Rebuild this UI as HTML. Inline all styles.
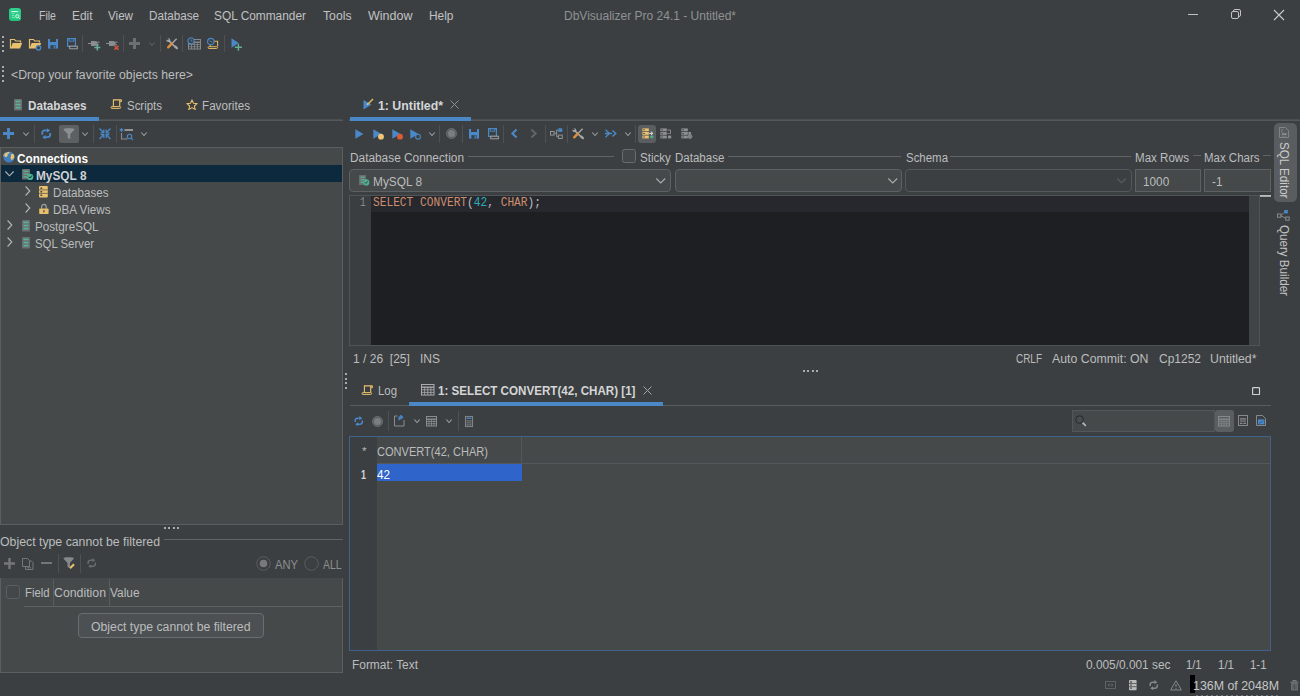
<!DOCTYPE html>
<html lang="en"><head><meta charset="utf-8"><title>DbVisualizer Pro 24.1 - Untitled*</title>
<style>
html,body{margin:0;padding:0}
body{width:1300px;height:696px;overflow:hidden;background:#3c3f41;position:relative;font-family:"Liberation Sans",sans-serif;}
.r{position:absolute}
.i{position:absolute;overflow:visible}
.t{position:absolute;white-space:pre;line-height:16px;transform-origin:0 50%;}
.m{font-family:"Liberation Mono",monospace}
</style></head>
<body>
<div class="r" style="left:9px;top:8px;width:12px;height:13px;background:linear-gradient(180deg,#2fd28c,#22c57e);border-radius:3px;"></div>
<div class="r" style="left:2px;top:36.0px;width:2px;height:2px;background:#a9abac;"></div>
<div class="r" style="left:2px;top:40.7px;width:2px;height:2px;background:#a9abac;"></div>
<div class="r" style="left:2px;top:45.4px;width:2px;height:2px;background:#a9abac;"></div>
<div class="r" style="left:2px;top:50.1px;width:2px;height:2px;background:#a9abac;"></div>
<div class="r" style="left:2px;top:65.5px;width:2px;height:2px;background:#a9abac;"></div>
<div class="r" style="left:2px;top:70.2px;width:2px;height:2px;background:#a9abac;"></div>
<div class="r" style="left:2px;top:74.9px;width:2px;height:2px;background:#a9abac;"></div>
<div class="r" style="left:2px;top:79.6px;width:2px;height:2px;background:#a9abac;"></div>
<div class="r" style="left:82px;top:34.5px;width:1px;height:17px;background:#4e5153;"></div>
<div class="r" style="left:123px;top:34.5px;width:1px;height:17px;background:#4e5153;"></div>
<div class="r" style="left:160px;top:34.5px;width:1px;height:17px;background:#4e5153;"></div>
<div class="r" style="left:182px;top:34.5px;width:1px;height:17px;background:#4e5153;"></div>
<div class="r" style="left:223.5px;top:34.5px;width:1px;height:17px;background:#4e5153;"></div>
<div class="r" style="left:0px;top:119px;width:343px;height:2px;background:linear-gradient(#46494b,#595c5e);"></div>
<div class="r" style="left:0px;top:117px;width:99px;height:4px;background:#4a88c7;"></div>
<div class="r" style="left:34px;top:125px;width:1px;height:18px;background:#4e5153;"></div>
<div class="r" style="left:59px;top:125px;width:20px;height:18px;background:#5c6062;border-radius:2px;"></div>
<div class="r" style="left:93px;top:125px;width:1px;height:18px;background:#4e5153;"></div>
<div class="r" style="left:116px;top:125px;width:1px;height:18px;background:#4e5153;"></div>
<div class="r" style="left:0px;top:147px;width:343px;height:378px;background:#45494a;border:1px solid #5c5f60;box-sizing:border-box;"></div>
<div class="r" style="left:1px;top:165px;width:341px;height:17px;background:#0d293e;"></div>
<div class="r" style="left:164.0px;top:527px;width:2px;height:2px;background:#a9abac;"></div>
<div class="r" style="left:168.4px;top:527px;width:2px;height:2px;background:#a9abac;"></div>
<div class="r" style="left:172.8px;top:527px;width:2px;height:2px;background:#a9abac;"></div>
<div class="r" style="left:177.2px;top:527px;width:2px;height:2px;background:#a9abac;"></div>
<div class="r" style="left:164px;top:539px;width:179px;height:1px;background:#616466;"></div>
<div class="r" style="left:41px;top:562px;width:11px;height:2.4px;background:#74777a;"></div>
<div class="r" style="left:57.5px;top:553.5px;width:1px;height:19px;background:#4e5153;"></div>
<div class="r" style="left:80px;top:553.5px;width:1px;height:19px;background:#4e5153;"></div>
<div class="r" style="left:0px;top:578px;width:343px;height:95px;background:#45494a;border:1px solid #5c5f60;box-sizing:border-box;border-top:none;"></div>
<div class="r" style="left:5.5px;top:585px;width:14px;height:13.5px;background:#43474a;border:1px solid #5c5f61;box-sizing:border-box;border-radius:3px;"></div>
<div class="r" style="left:53px;top:579px;width:1px;height:27px;background:#595c5e;"></div>
<div class="r" style="left:109px;top:579px;width:1px;height:27px;background:#595c5e;"></div>
<div class="r" style="left:24px;top:606px;width:318px;height:1px;background:#5e6162;"></div>
<div class="r" style="left:78px;top:613px;width:186px;height:25px;background:#4c5052;border:1px solid #6b6e70;box-sizing:border-box;border-radius:4px;"></div>
<div class="r" style="left:349px;top:119px;width:951px;height:2px;background:linear-gradient(#46494b,#595c5e);"></div>
<div class="r" style="left:349.5px;top:117px;width:121.5px;height:4px;background:#4a88c7;"></div>
<div class="r" style="left:439px;top:125px;width:1px;height:18px;background:#4e5153;"></div>
<div class="r" style="left:462px;top:125px;width:1px;height:18px;background:#4e5153;"></div>
<div class="r" style="left:503px;top:125px;width:1px;height:18px;background:#4e5153;"></div>
<div class="r" style="left:544.5px;top:125px;width:1px;height:18px;background:#4e5153;"></div>
<div class="r" style="left:566.5px;top:125px;width:1px;height:18px;background:#4e5153;"></div>
<div class="r" style="left:635px;top:125px;width:1px;height:18px;background:#4e5153;"></div>
<div class="r" style="left:638px;top:124.5px;width:18px;height:18.5px;background:#5a5e60;border-radius:3px;"></div>
<div class="r" style="left:468px;top:156px;width:146px;height:1px;background:#616466;"></div>
<div class="r" style="left:622px;top:149px;width:13.5px;height:13.5px;background:#43474a;border:1px solid #6a6d6f;box-sizing:border-box;border-radius:2.5px;"></div>
<div class="r" style="left:728px;top:156px;width:173px;height:1px;background:#616466;"></div>
<div class="r" style="left:950px;top:156px;width:181px;height:1px;background:#616466;"></div>
<div class="r" style="left:1193px;top:155px;width:7.5px;height:1px;background:#616466;"></div>
<div class="r" style="left:1263px;top:155px;width:7.5px;height:1px;background:#616466;"></div>
<div class="r" style="left:349px;top:169px;width:322px;height:23px;background:#45494a;border:1px solid #5e6163;box-sizing:border-box;border-radius:4px;"></div>
<div class="r" style="left:675px;top:169px;width:227px;height:23px;background:#45494a;border:1px solid #5e6163;box-sizing:border-box;border-radius:4px;"></div>
<div class="r" style="left:905px;top:169px;width:227px;height:23px;background:#3c3f41;border:1px solid #55585a;box-sizing:border-box;border-radius:4px;"></div>
<div class="r" style="left:1135px;top:169px;width:66px;height:23px;background:#45494a;border:1px solid #5e6163;box-sizing:border-box;"></div>
<div class="r" style="left:1204px;top:169px;width:67px;height:23px;background:#45494a;border:1px solid #5e6163;box-sizing:border-box;"></div>
<div class="r" style="left:349px;top:195px;width:911px;height:151px;background:#1e1f22;border:1px solid #515456;box-sizing:border-box;"></div>
<div class="r" style="left:350px;top:196px;width:21px;height:149px;background:#3b3e40;"></div>
<div class="r" style="left:371px;top:196px;width:878px;height:16px;background:#26282e;"></div>
<div class="r" style="left:1249px;top:196px;width:10px;height:149px;background:#404446;"></div>
<div class="r" style="left:1260px;top:195px;width:11px;height:2px;background:linear-gradient(#c4c6c7,#9c9fa1);"></div>
<div class="r" style="left:803.0px;top:369.5px;width:2px;height:2px;background:#a9abac;"></div>
<div class="r" style="left:807.4px;top:369.5px;width:2px;height:2px;background:#a9abac;"></div>
<div class="r" style="left:811.8px;top:369.5px;width:2px;height:2px;background:#a9abac;"></div>
<div class="r" style="left:816.2px;top:369.5px;width:2px;height:2px;background:#a9abac;"></div>
<div class="r" style="left:345px;top:373.0px;width:2px;height:2px;background:#a9abac;"></div>
<div class="r" style="left:345px;top:377.7px;width:2px;height:2px;background:#a9abac;"></div>
<div class="r" style="left:345px;top:382.4px;width:2px;height:2px;background:#a9abac;"></div>
<div class="r" style="left:345px;top:387.1px;width:2px;height:2px;background:#a9abac;"></div>
<div class="r" style="left:1273.5px;top:123px;width:23.5px;height:78.5px;background:#5a5d5f;border-radius:5px;"></div>
<div class="r" style="left:349.5px;top:405px;width:921.5px;height:1px;background:#5a5d5f;"></div>
<div class="r" style="left:409px;top:402px;width:254px;height:4px;background:#4a88c7;"></div>
<div class="r" style="left:388px;top:411px;width:1px;height:20px;background:#4e5153;"></div>
<div class="r" style="left:457.5px;top:411px;width:1px;height:20px;background:#4e5153;"></div>
<div class="r" style="left:1072px;top:410px;width:143px;height:22px;background:#45494a;border:1px solid #54575a;box-sizing:border-box;"></div>
<div class="r" style="left:1215px;top:410px;width:19px;height:22px;background:#5a5e60;border-radius:3px;"></div>
<div class="r" style="left:349px;top:436px;width:922px;height:215px;background:#45494a;border:1px solid #40628a;box-sizing:border-box;"></div>
<div class="r" style="left:350px;top:437px;width:27px;height:213px;background:#3c3f41;"></div>
<div class="r" style="left:377px;top:463px;width:893px;height:1px;background:#55585a;"></div>
<div class="r" style="left:521px;top:437px;width:1px;height:26px;background:#55585a;"></div>
<div class="r" style="left:377px;top:464px;width:145px;height:17px;background:#2f65ca;"></div>
<div class="r" style="left:1190px;top:675px;width:5px;height:18px;background:#000000;"></div>
<div class="r" style="left:1196px;top:695px;width:82px;height:1px;background:repeating-linear-gradient(90deg,#74777a 0 2px,#3c3f41 2px 5px);"></div>
<svg class="i" style="left:9px;top:8px" width="12" height="13" viewBox="0 0 12 13"><path d="M2.8 3.6h6" stroke="#e9fff5" stroke-width="1" stroke-linecap="round"/><path d="M2.8 5.6h2.6M2.8 7.6h2.6M2.8 9.6h3.4" stroke="#8fe8c0" stroke-width="0.8"/><circle cx="8.3" cy="8.2" r="1.7" fill="#5cdca6" stroke="#c9f7e2" stroke-width="0.9"/><circle cx="8.3" cy="8.3" r="0.6" fill="#22c47d"/><path d="M9.5 9.5l1.5 1.4" stroke="#c9f7e2" stroke-width="0.9"/></svg>
<svg class="i" style="left:1188px;top:9px" width="10" height="11" viewBox="0 0 10 11"><path d="M0 5.5h10" stroke="#c0c2c3" stroke-width="1"/></svg>
<svg class="i" style="left:1231px;top:9px" width="10" height="10" viewBox="0 0 10 10"><rect x="0.5" y="2.5" width="7" height="7" rx="1.5" fill="none" stroke="#c0c2c3"/><path d="M2.5 2.5v-0.5a1.5 1.5 0 0 1 1.5 -1.5h4a1.5 1.5 0 0 1 1.5 1.5v4a1.5 1.5 0 0 1 -1.5 1.5h-0.5" fill="none" stroke="#c0c2c3"/></svg>
<svg class="i" style="left:1273.5px;top:9.5px" width="10" height="10" viewBox="0 0 10 10"><path d="M0 0l10 10M10 0l-10 10" stroke="#c8cacb" stroke-width="1.1"/></svg>
<svg class="i" style="left:10px;top:37.5px" width="13" height="12" viewBox="0 0 13 12"><path d="M0.5 10.5V1.5h4l1.2 1.5h4.8v1.5" fill="none" stroke="#e9c16c" stroke-width="1.2"/><path d="M0.6 10.6l2-5.6h9.6l-2.2 5.6z" fill="#e9c16c"/></svg>
<svg class="i" style="left:29px;top:37.5px" width="13" height="12" viewBox="0 0 13 12"><path d="M0.5 10.5V1.5h4l1.2 1.5h4.8v1.5" fill="none" stroke="#e9c16c" stroke-width="1.2"/><path d="M0.6 10.6l2-5.6h9.6l-2.2 5.6z" fill="#e9c16c"/><circle cx="9.5" cy="9.8" r="2.2" fill="#3c3f41" stroke="#4a88c7" stroke-width="1.3"/></svg>
<svg class="i" style="left:48px;top:38.5px" width="10" height="10" viewBox="0 0 10 10"><path d="M0 0h10v9.6h-10z" fill="#4a88c7"/><rect x="2" y="0" width="6" height="3" fill="#3c3f41"/><rect x="2.4" y="6.2" width="5.2" height="3.5" fill="#3c3f41"/><rect x="5.6" y="6.6" width="1.2" height="3" fill="#4a88c7"/></svg>
<svg class="i" style="left:67px;top:37.5px" width="11" height="12" viewBox="0 0 11 12"><path d="M0.6 0.6h7.8v7.8h-7.8z" fill="none" stroke="#4a88c7" stroke-width="1.2"/><rect x="2" y="4.6" width="5" height="3.6" fill="#4a88c7" opacity="0.0"/><path d="M2.2 0.6v2.6h4.6v-2.6" fill="none" stroke="#4a88c7" stroke-width="1"/><rect x="2.7" y="8.2" width="7.6" height="2.6" fill="#3c3f41" stroke="#a9abac" stroke-width="0.9"/></svg>
<svg class="i" style="left:88px;top:38.5px" width="13" height="12" viewBox="0 0 13 12"><path d="M0 4.5h3" stroke="#8b8e90" stroke-width="1"/><path d="M3 2h3.5c2 0 3 1 3 2.5s-1 2.5 -3 2.5h-3.5z" fill="#8b8e90"/><path d="M8 3.2h3.5M8 5.8h3" stroke="#8b8e90" stroke-width="1"/><path d="M9.3 5.6v6M6.3 8.6h6" stroke="#64b097" stroke-width="1.5"/></svg>
<svg class="i" style="left:106px;top:38.5px" width="13" height="12" viewBox="0 0 13 12"><path d="M0 4.5h3" stroke="#8b8e90" stroke-width="1"/><path d="M3 2h3.5c2 0 3 1 3 2.5s-1 2.5 -3 2.5h-3.5z" fill="#8b8e90"/><path d="M8 3.2h3.5M8 5.8h3" stroke="#8b8e90" stroke-width="1"/><path d="M8.5 6.8l4 4M12.5 6.8l-4 4" stroke="#d8583a" stroke-width="1.5"/></svg>
<svg class="i" style="left:128.7px;top:38px" width="11" height="11" viewBox="0 0 11 11"><path d="M5.5 0v11 M0 5.5h11" stroke="#6d7072" stroke-width="3"/></svg>
<svg class="i" style="left:149px;top:42px" width="6" height="4.5" viewBox="0 0 6 4.5"><path d="M0.3 0.5l2.7 3l2.7 -3" fill="none" stroke="#5d6062" stroke-width="1.1"/></svg>
<svg class="i" style="left:166px;top:38px" width="12" height="11" viewBox="0 0 12 11"><path d="M2.2 2.2l8 7.6" stroke="#a4a7a9" stroke-width="1.7"/><circle cx="2.4" cy="2.2" r="1.9" fill="#a4a7a9"/><circle cx="1.6" cy="1.3" r="1" fill="#3c3f41"/><path d="M10.6 0.8l-4.6 4.6" stroke="#a4a7a9" stroke-width="1.4"/><path d="M5.8 5.6l-3.6 3.8" stroke="#e08f3f" stroke-width="2.3" stroke-linecap="round"/><path d="M9.4 8.6l1.6 1.6" stroke="#a4a7a9" stroke-width="2.2" stroke-linecap="round"/></svg>
<svg class="i" style="left:188px;top:38.5px" width="13" height="10.5" viewBox="0 0 13 10.5"><rect x="0.5" y="0.5" width="12" height="9.5" fill="none" stroke="#86898b"/><path d="M0.5 3.2h12" stroke="#86898b" stroke-width="1.4"/><path d="M3.5 3v7" stroke="#86898b" stroke-width="0.8"/><path d="M6.5 3v7" stroke="#86898b" stroke-width="0.8"/><path d="M9.5 3v7" stroke="#86898b" stroke-width="0.8"/><path d="M0.5 5.46667h12" stroke="#86898b" stroke-width="0.8"/><path d="M0.5 7.73333h12" stroke="#86898b" stroke-width="0.8"/><circle cx="3" cy="1.8" r="3.1" fill="#3c3f41" stroke="#4a88c7" stroke-width="1.1"/><path d="M3 0.2v1.8h1.5" stroke="#4a88c7" stroke-width="0.8" fill="none"/></svg>
<svg class="i" style="left:207px;top:37.5px" width="12" height="12" viewBox="0 0 12 12"><path d="M7 3.3h3.6v5.2M3.3 7v2" fill="none" stroke="#d9b565" stroke-width="1.1"/><path d="M2 8.7h7.6a0.9 0.9 0 0 1 0 1.8h-7.6a0.9 0.9 0 0 1 0 -1.8z" fill="none" stroke="#d9b565" stroke-width="1"/><circle cx="3.8" cy="3.6" r="3.2" fill="#3c3f41" stroke="#4a88c7" stroke-width="1.1"/><path d="M2.4 2.8l1.6 0.9l1.3 0.5" stroke="#4a88c7" stroke-width="0.9" fill="none"/></svg>
<svg class="i" style="left:231px;top:38px" width="13" height="13" viewBox="0 0 13 13"><path d="M0.5 0.3v9.4l7.2 -4.7z" fill="#4a88c7"/><path d="M7.4 5.8v7M3.9 9.3h7" stroke="#64b097" stroke-width="1.4"/></svg>
<svg class="i" style="left:14px;top:98.5px" width="12" height="13.5" viewBox="0 0 12 13.5"><rect x="0" y="0" width="8" height="11.5" rx="0.6" fill="#6b6e70"/><rect x="1.5" y="1.6" width="5" height="1.7" fill="#57b396"/><rect x="1.5" y="4.7" width="5" height="1.7" fill="#57b396"/><rect x="1.5" y="7.8" width="5" height="1.7" fill="#57b396"/></svg>
<svg class="i" style="left:111px;top:99.3px" width="11" height="10" viewBox="0 0 11 10"><path d="M2.4 7.4V0.9h7.2a0.9 0.9 0 0 1 0 1.8h-0.9M8.7 1v6.4" fill="none" stroke="#e9c16c" stroke-width="1.1"/><path d="M0.9 7.6h7.8a0.9 0.9 0 0 1 0 1.8h-7.8a0.9 0.9 0 0 1 0 -1.8z" fill="none" stroke="#e9c16c" stroke-width="1"/></svg>
<svg class="i" style="left:186px;top:99px" width="12" height="11" viewBox="0 0 12 11"><path d="M6 0.9l1.5 3.3 3.6 0.4 -2.7 2.4 0.8 3.5 -3.2 -1.9 -3.2 1.9 0.8 -3.5 -2.7 -2.4 3.6 -0.4z" fill="none" stroke="#e9c16c" stroke-width="1.1" stroke-linejoin="round"/></svg>
<svg class="i" style="left:3px;top:128px" width="11" height="11" viewBox="0 0 11 11"><path d="M5.5 0v11 M0 5.5h11" stroke="#4a88c7" stroke-width="2.8"/></svg>
<svg class="i" style="left:23px;top:132px" width="6" height="4.5" viewBox="0 0 6 4.5"><path d="M0.3 0.5l2.7 3l2.7 -3" fill="none" stroke="#9da0a2" stroke-width="1.1"/></svg>
<svg class="i" style="left:41px;top:128px" width="10.5" height="11.6" viewBox="0 0 10 11"><path d="M1.2 6.3V4.8A2.5 2.5 0 0 1 3.7 2.3H6" fill="none" stroke="#4a88c7" stroke-width="1.7"/><path d="M5.6 0.1L8.8 2.3L5.6 4.5Z" fill="#4a88c7"/><path d="M8.8 4.7V6.2A2.5 2.5 0 0 1 6.3 8.7H4" fill="none" stroke="#4a88c7" stroke-width="1.7"/><path d="M4.4 6.5L1.2 8.7L4.4 10.9Z" fill="#4a88c7"/></svg>
<svg class="i" style="left:63px;top:128px" width="12" height="12" viewBox="0 0 12 12"><path d="M0.5 1.2c0 -0.6 2.5 -1 5.5 -1s5.5 0.4 5.5 1c0 0.4 -0.3 0.8 -0.8 1.3l-3.4 3.6v5l-2.6 -1v-4l-3.4 -3.6c-0.5 -0.5 -0.8 -0.9 -0.8 -1.3z" fill="#8c8f91"/></svg>
<svg class="i" style="left:82px;top:132px" width="6" height="4.5" viewBox="0 0 6 4.5"><path d="M0.3 0.5l2.7 3l2.7 -3" fill="none" stroke="#9da0a2" stroke-width="1.1"/></svg>
<svg class="i" style="left:99px;top:128px" width="12" height="11.5" viewBox="0 0 12 11.5"><path d="M0.5 0.5l4 4M11.5 0.5l-4 4M0.5 11l4 -4M11.5 11l-4 -4" stroke="#4a88c7" stroke-width="1.3"/><path d="M1.6 4.8h3.2v-3.2M10.4 4.8h-3.2v-3.2M1.6 6.7h3.2v3.2M10.4 6.7h-3.2v3.2" fill="none" stroke="#4a88c7" stroke-width="1.3"/></svg>
<svg class="i" style="left:120px;top:127.5px" width="14" height="13" viewBox="0 0 14 13"><path d="M1.5 0l0 4M-0.3 1l3.6 2M-0.3 3l3.6 -2" stroke="#4a88c7" stroke-width="0.9"/><path d="M4.5 2h8.5" stroke="#a9abac" stroke-width="1.6"/><path d="M1.5 5v6h6" fill="none" stroke="#8b8e90" stroke-width="1.1"/><circle cx="9.5" cy="8.5" r="2.2" fill="none" stroke="#4a88c7" stroke-width="1.1"/><path d="M11 10.2l2 2" stroke="#4a88c7" stroke-width="1.2"/></svg>
<svg class="i" style="left:141px;top:132px" width="6" height="4.5" viewBox="0 0 6 4.5"><path d="M0.3 0.5l2.7 3l2.7 -3" fill="none" stroke="#9da0a2" stroke-width="1.1"/></svg>
<svg class="i" style="left:3px;top:151px" width="12" height="12" viewBox="0 0 12 12"><circle cx="6" cy="6" r="5.6" fill="#3f7fc1"/><path d="M2.2 2.6c1.4 -1.4 3 -1.8 4.4 -1.6l-0.6 1.6 -1.6 0.6 0.4 1.6 -1.6 1.4 -1.6 -0.8c-0.2 -1 0 -2 0.6 -2.8z" fill="#ecc66e"/><path d="M7.6 3.4l2.4 -0.6c0.8 0.8 1.3 1.8 1.4 3l-1.4 2.6 -1.8 0.4 -0.8 -2.2 0.8 -1.4z" fill="#ecc66e"/><path d="M0.6 5.2c0.3 -1.6 1 -2.8 2 -3.6" stroke="#c9d3dc" stroke-width="0.8" fill="none"/></svg>
<svg class="i" style="left:5px;top:171px" width="9" height="6" viewBox="0 0 9 6"><path d="M0.4 0.5l4.1 4.3l4.1 -4.3" fill="none" stroke="#b4b6b7" stroke-width="1.1"/></svg>
<svg class="i" style="left:21.5px;top:168.5px" width="12" height="12.5" viewBox="0 0 12 12.5"><rect x="0" y="0" width="8" height="10.5" rx="0.6" fill="#6b6e70"/><rect x="1.5" y="1.6" width="5" height="1.36667" fill="#57b396"/><rect x="1.5" y="4.36667" width="5" height="1.36667" fill="#57b396"/><rect x="1.5" y="7.13333" width="5" height="1.36667" fill="#57b396"/><circle cx="8.3" cy="7.9" r="3.1" fill="#4fb08d"/><path d="M6.6 7.7l1.3 1.3l2 -2.4" fill="none" stroke="#0d293e" stroke-width="1"/></svg>
<svg class="i" style="left:24.5px;top:186px" width="6" height="10" viewBox="0 0 6 10"><path d="M0.6 0.5l4.2 4.5l-4.2 4.5" fill="none" stroke="#b4b6b7" stroke-width="1.1"/></svg>
<svg class="i" style="left:39px;top:186px" width="9" height="11.5" viewBox="0 0 9 11.5"><rect x="0" y="0" width="8.8" height="11.4" rx="1" fill="#e9c16c"/><path d="M1.4 2.2h1.8M1.4 5.7h1.8M1.4 9.2h1.8" stroke="#45494a" stroke-width="1.5"/><path d="M0 3.9h8.8M0 7.4h8.8" stroke="#45494a" stroke-width="0.7"/></svg>
<svg class="i" style="left:24.5px;top:203px" width="6" height="10" viewBox="0 0 6 10"><path d="M0.6 0.5l4.2 4.5l-4.2 4.5" fill="none" stroke="#b4b6b7" stroke-width="1.1"/></svg>
<svg class="i" style="left:38.5px;top:202.5px" width="11" height="12" viewBox="0 0 11 12"><path d="M2.6 5.5v-1.8a2.3 2.3 0 0 1 4.6 0v1.8" fill="none" stroke="#a0a3a5" stroke-width="1.2"/><rect x="0.2" y="5.4" width="9.4" height="5.6" rx="0.7" fill="#e9c16c"/><rect x="4.3" y="7" width="1.2" height="2.4" fill="#45494a"/></svg>
<svg class="i" style="left:6.7px;top:220px" width="6" height="10" viewBox="0 0 6 10"><path d="M0.6 0.5l4.2 4.5l-4.2 4.5" fill="none" stroke="#b4b6b7" stroke-width="1.1"/></svg>
<svg class="i" style="left:21.5px;top:219.5px" width="12" height="13.5" viewBox="0 0 12 13.5"><rect x="0" y="0" width="8" height="11.5" rx="0.6" fill="#6b6e70"/><rect x="1.5" y="1.6" width="5" height="1.7" fill="#57b396"/><rect x="1.5" y="4.7" width="5" height="1.7" fill="#57b396"/><rect x="1.5" y="7.8" width="5" height="1.7" fill="#57b396"/></svg>
<svg class="i" style="left:6.7px;top:237px" width="6" height="10" viewBox="0 0 6 10"><path d="M0.6 0.5l4.2 4.5l-4.2 4.5" fill="none" stroke="#b4b6b7" stroke-width="1.1"/></svg>
<svg class="i" style="left:21.5px;top:236.5px" width="12" height="13.5" viewBox="0 0 12 13.5"><rect x="0" y="0" width="8" height="11.5" rx="0.6" fill="#6b6e70"/><rect x="1.5" y="1.6" width="5" height="1.7" fill="#57b396"/><rect x="1.5" y="4.7" width="5" height="1.7" fill="#57b396"/><rect x="1.5" y="7.8" width="5" height="1.7" fill="#57b396"/></svg>
<svg class="i" style="left:4px;top:558px" width="11" height="11" viewBox="0 0 11 11"><path d="M5.5 0v11 M0 5.5h11" stroke="#74777a" stroke-width="2.4"/></svg>
<svg class="i" style="left:22px;top:557.5px" width="12" height="12" viewBox="0 0 12 12"><path d="M0.5 0.5h5l2 2v6h-7z" fill="none" stroke="#74777a" stroke-width="1"/><path d="M3.5 9v2.5h7.5v-7l-1.5 -1.5h-2" fill="none" stroke="#74777a" stroke-width="1"/><path d="M5 9.8h4" stroke="#74777a" stroke-width="1"/></svg>
<svg class="i" style="left:63px;top:557px" width="13" height="13" viewBox="0 0 13 13"><path d="M0.5 1.2c0 -0.6 2.5 -1 5.2 -1s5.2 0.4 5.2 1c0 0.4 -0.3 0.8 -0.8 1.3l-3.2 3.6v5l-2.4 -1v-4l-3.2 -3.6c-0.5 -0.5 -0.8 -0.9 -0.8 -1.3z" fill="#86898b"/><path d="M7 11.3l4 -4" stroke="#e9c16c" stroke-width="2.2"/></svg>
<svg class="i" style="left:87px;top:557.5px" width="9.5" height="10.4" viewBox="0 0 10 11"><path d="M1.2 6.3V4.8A2.5 2.5 0 0 1 3.7 2.3H6" fill="none" stroke="#686b6d" stroke-width="1.6"/><path d="M5.6 0.1L8.8 2.3L5.6 4.5Z" fill="#686b6d"/><path d="M8.8 4.7V6.2A2.5 2.5 0 0 1 6.3 8.7H4" fill="none" stroke="#686b6d" stroke-width="1.6"/><path d="M4.4 6.5L1.2 8.7L4.4 10.9Z" fill="#686b6d"/></svg>
<svg class="i" style="left:256px;top:556px" width="15" height="15" viewBox="0 0 15 15"><circle cx="7.5" cy="7.5" r="6.8" fill="none" stroke="#5a5d5f" stroke-width="1"/><circle cx="7.5" cy="7.5" r="3.8" fill="#77797b"/></svg>
<svg class="i" style="left:303.5px;top:556px" width="15" height="15" viewBox="0 0 15 15"><circle cx="7.5" cy="7.5" r="6.8" fill="none" stroke="#5a5d5f" stroke-width="1"/></svg>
<svg class="i" style="left:363px;top:98px" width="11" height="12" viewBox="0 0 11 12"><path d="M0.5 2v9.5l8 -5z" fill="#4a88c7"/><path d="M4.5 6.5l5.5 -5.5" stroke="#d9b45e" stroke-width="1.6"/><path d="M4 7l1.2 -2" stroke="#f5e1a8" stroke-width="0.8"/></svg>
<svg class="i" style="left:450px;top:100px" width="9" height="9" viewBox="0 0 9 9"><path d="M0.5 0.5l8 8M8.5 0.5l-8 8" stroke="#8e9193" stroke-width="1"/></svg>
<svg class="i" style="left:355px;top:128.6px" width="12" height="12" viewBox="0 0 12 12"><path d="M0.3 0.2v9.6l8.2 -4.8z" fill="#4a88c7"/></svg>
<svg class="i" style="left:373.3px;top:128.6px" width="12" height="12" viewBox="0 0 12 12"><path d="M0.3 0.2v9.6l8.2 -4.8z" fill="#4a88c7"/><circle cx="8" cy="7.7" r="2.9" fill="#f0c674"/></svg>
<svg class="i" style="left:391.8px;top:128.6px" width="12" height="12" viewBox="0 0 12 12"><path d="M0.3 0.2v9.6l8.2 -4.8z" fill="#4a88c7"/><circle cx="8" cy="7.7" r="2.9" fill="#dd5b35"/></svg>
<svg class="i" style="left:410px;top:128.6px" width="12" height="12" viewBox="0 0 12 12"><path d="M0.3 0.2v9.6l8.2 -4.8z" fill="#4a88c7"/><circle cx="8" cy="7.7" r="2.4" fill="#3c3f41" stroke="#4a88c7" stroke-width="1.1"/></svg>
<svg class="i" style="left:428.5px;top:132px" width="6" height="4.5" viewBox="0 0 6 4.5"><path d="M0.3 0.5l2.7 3l2.7 -3" fill="none" stroke="#9da0a2" stroke-width="1.1"/></svg>
<svg class="i" style="left:445.5px;top:128px" width="11" height="11" viewBox="0 0 11 11"><circle cx="5.5" cy="5.5" r="5" fill="#5a5d5f" stroke="#6e7173" stroke-width="0.9"/><circle cx="5.5" cy="5.5" r="3.6" fill="#7b7e80"/></svg>
<svg class="i" style="left:468.5px;top:128.5px" width="10" height="10" viewBox="0 0 10 10"><path d="M0 0h10v9.6h-10z" fill="#4a88c7"/><rect x="2" y="0" width="6" height="3" fill="#3c3f41"/><rect x="2.4" y="6.2" width="5.2" height="3.5" fill="#3c3f41"/><rect x="5.6" y="6.6" width="1.2" height="3" fill="#4a88c7"/></svg>
<svg class="i" style="left:487.5px;top:127.5px" width="11" height="12" viewBox="0 0 11 12"><path d="M0.6 0.6h7.8v7.8h-7.8z" fill="none" stroke="#4a88c7" stroke-width="1.2"/><rect x="2" y="4.6" width="5" height="3.6" fill="#4a88c7" opacity="0.0"/><path d="M2.2 0.6v2.6h4.6v-2.6" fill="none" stroke="#4a88c7" stroke-width="1"/><rect x="2.7" y="8.2" width="7.6" height="2.6" fill="#3c3f41" stroke="#a9abac" stroke-width="0.9"/></svg>
<svg class="i" style="left:511px;top:128.7px" width="7" height="9" viewBox="0 0 7 9"><path d="M5.6 0.6l-4.2 3.9l4.2 3.9" fill="none" stroke="#4a88c7" stroke-width="2.1"/></svg>
<svg class="i" style="left:530px;top:128.7px" width="7" height="9" viewBox="0 0 7 9"><path d="M1.4 0.6l4.2 3.9l-4.2 3.9" fill="none" stroke="#616466" stroke-width="2.1"/></svg>
<svg class="i" style="left:549.5px;top:128px" width="13" height="11" viewBox="0 0 13 11"><rect x="0.5" y="3.5" width="3.6" height="3.6" fill="none" stroke="#9a9d9f" stroke-width="0.9"/><path d="M4.2 5.3h2.5M6.7 2v6.8M6.7 2h1.6M6.7 8.8h1.6" stroke="#9a9d9f" stroke-width="0.9" fill="none"/><rect x="8.3" y="0.3" width="4" height="3.6" fill="#4a88c7"/><rect x="8.6" y="7.1" width="3.6" height="3.4" fill="none" stroke="#9a9d9f" stroke-width="0.9"/></svg>
<svg class="i" style="left:572px;top:128px" width="12" height="11" viewBox="0 0 12 11"><path d="M2.2 2.2l8 7.6" stroke="#a4a7a9" stroke-width="1.7"/><circle cx="2.4" cy="2.2" r="1.9" fill="#a4a7a9"/><circle cx="1.6" cy="1.3" r="1" fill="#3c3f41"/><path d="M10.6 0.8l-4.6 4.6" stroke="#a4a7a9" stroke-width="1.4"/><path d="M5.8 5.6l-3.6 3.8" stroke="#e08f3f" stroke-width="2.3" stroke-linecap="round"/><path d="M9.4 8.6l1.6 1.6" stroke="#a4a7a9" stroke-width="2.2" stroke-linecap="round"/></svg>
<svg class="i" style="left:592px;top:132px" width="6" height="4.5" viewBox="0 0 6 4.5"><path d="M0.3 0.5l2.7 3l2.7 -3" fill="none" stroke="#9da0a2" stroke-width="1.1"/></svg>
<svg class="i" style="left:605px;top:128.7px" width="12" height="9" viewBox="0 0 12 9"><path d="M0.5 0.8l4 3.7l-4 3.7M0 4.5h7" fill="none" stroke="#4a88c7" stroke-width="1.3"/><path d="M7.5 1.5l3.2 3l-3.2 3" fill="none" stroke="#4a88c7" stroke-width="1.5"/></svg>
<svg class="i" style="left:624.5px;top:132px" width="6" height="4.5" viewBox="0 0 6 4.5"><path d="M0.3 0.5l2.7 3l2.7 -3" fill="none" stroke="#9da0a2" stroke-width="1.1"/></svg>
<svg class="i" style="left:642px;top:127.5px" width="12" height="11" viewBox="0 0 12 11"><rect x="0.4" y="0.4" width="6.4" height="2.8" fill="#e9c16c"/><rect x="0.4" y="4" width="6.4" height="2.8" fill="#e9c16c"/><rect x="0.4" y="7.6" width="6.4" height="2.8" fill="#e9c16c"/><path d="M1.3 1.8h1.6M1.3 5.4h1.6M1.3 9h1.6" stroke="#3c3f41" stroke-width="0.9"/><path d="M7.2 5.4h3.4M9 3.7l1.8 1.7l-1.8 1.7" fill="none" stroke="#e5e7e8" stroke-width="1"/><path d="M8 8.8h3.5M9.8 7.2v3.3" stroke="#4fae8c" stroke-width="1.4"/></svg>
<svg class="i" style="left:660px;top:127.5px" width="12" height="11" viewBox="0 0 12 11"><rect x="0.4" y="0.4" width="6.4" height="2.8" fill="#8d9092"/><rect x="0.4" y="4" width="6.4" height="2.8" fill="#8d9092"/><rect x="0.4" y="7.6" width="6.4" height="2.8" fill="#8d9092"/><path d="M1.3 1.8h1.6M1.3 5.4h1.6M1.3 9h1.6" stroke="#3c3f41" stroke-width="0.9"/><path d="M7.5 2h3v4M7.5 5.6h2" fill="none" stroke="#8d9092" stroke-width="0.9"/><rect x="8" y="7.6" width="3.2" height="2.8" fill="#8d9092"/></svg>
<svg class="i" style="left:680.5px;top:127.5px" width="12" height="11" viewBox="0 0 12 11"><rect x="0.4" y="0.4" width="6.4" height="2.8" fill="#8d9092"/><rect x="0.4" y="4" width="6.4" height="2.8" fill="#8d9092"/><rect x="0.4" y="7.6" width="6.4" height="2.8" fill="#8d9092"/><path d="M1.3 1.8h1.6M1.3 5.4h1.6M1.3 9h1.6" stroke="#3c3f41" stroke-width="0.9"/><rect x="7.4" y="4" width="2.6" height="2.8" fill="#8d9092"/><circle cx="9" cy="8.6" r="2.4" fill="#7f8284"/></svg>
<svg class="i" style="left:359px;top:175px" width="11" height="12" viewBox="0 0 11 12"><rect x="0" y="0" width="7" height="10" rx="0.6" fill="#6b6e70"/><rect x="1.5" y="1.6" width="4" height="1.2" fill="#57b396"/><rect x="1.5" y="4.2" width="4" height="1.2" fill="#57b396"/><rect x="1.5" y="6.8" width="4" height="1.2" fill="#57b396"/><circle cx="7.3" cy="7.4" r="3.1" fill="#4fb08d"/><path d="M5.6 7.2l1.3 1.3l2 -2.4" fill="none" stroke="#45494a" stroke-width="1"/></svg>
<svg class="i" style="left:655.5px;top:177.8px" width="9.5" height="6" viewBox="0 0 9.5 6"><path d="M0.3 0.5l4.45 4.5l4.45 -4.5" fill="none" stroke="#a9abac" stroke-width="1.1"/></svg>
<svg class="i" style="left:887.5px;top:177.8px" width="9.5" height="6" viewBox="0 0 9.5 6"><path d="M0.3 0.5l4.45 4.5l4.45 -4.5" fill="none" stroke="#a9abac" stroke-width="1.1"/></svg>
<svg class="i" style="left:1116.5px;top:177.8px" width="9" height="5.8" viewBox="0 0 9 5.8"><path d="M0.3 0.5l4.2 4.3l4.2 -4.3" fill="none" stroke="#5b5e60" stroke-width="1.1"/></svg>
<svg class="i" style="left:1279px;top:127px" width="10" height="11" viewBox="0 0 10 11"><path d="M0.5 0.5h6l3 3v7h-9z" fill="none" stroke="#85888a" stroke-width="0.9"/><path d="M2 3h2M2 5h1.5" stroke="#8a8d8f" stroke-width="0.8"/><rect x="3" y="6.2" width="4.5" height="1.8" fill="#8a8d8f"/><path d="M2.5 9.2h5" stroke="#7f8284" stroke-width="0.7"/></svg>
<svg class="i" style="left:1277px;top:210px" width="13" height="11" viewBox="0 0 13 11"><rect x="0.5" y="4" width="3.4" height="3.2" fill="none" stroke="#8f9294" stroke-width="0.9"/><path d="M4 5.5l3 -3M4 5.8l4.8 2.5" stroke="#8f9294" stroke-width="0.9"/><rect x="7.2" y="0" width="3.6" height="3.4" fill="#4a88c7"/><rect x="8.8" y="7" width="3.4" height="3.2" fill="none" stroke="#8f9294" stroke-width="0.9"/></svg>
<svg class="i" style="left:362px;top:385px" width="11" height="10" viewBox="0 0 11 10"><path d="M2.4 7.4V0.9h7.2a0.9 0.9 0 0 1 0 1.8h-0.9M8.7 1v6.4" fill="none" stroke="#e9c16c" stroke-width="1.1"/><path d="M0.9 7.6h7.8a0.9 0.9 0 0 1 0 1.8h-7.8a0.9 0.9 0 0 1 0 -1.8z" fill="none" stroke="#e9c16c" stroke-width="1"/></svg>
<svg class="i" style="left:420.5px;top:384px" width="13.5" height="11.5" viewBox="0 0 13.5 11.5"><rect x="0.5" y="0.5" width="12.5" height="10.5" fill="none" stroke="#a9abac"/><path d="M0.5 3.2h12.5" stroke="#a9abac" stroke-width="1.4"/><path d="M3.625 3v8" stroke="#a9abac" stroke-width="0.8"/><path d="M6.75 3v8" stroke="#a9abac" stroke-width="0.8"/><path d="M9.875 3v8" stroke="#a9abac" stroke-width="0.8"/><path d="M0.5 5.8h12.5" stroke="#a9abac" stroke-width="0.8"/><path d="M0.5 8.4h12.5" stroke="#a9abac" stroke-width="0.8"/></svg>
<svg class="i" style="left:643px;top:386px" width="9" height="9" viewBox="0 0 9 9"><path d="M0.5 0.5l8 8M8.5 0.5l-8 8" stroke="#a3a6a8" stroke-width="1"/></svg>
<svg class="i" style="left:1252px;top:386.5px" width="9" height="9" viewBox="0 0 9 9"><rect x="0.6" y="0.6" width="6.9" height="6.9" rx="0.6" fill="none" stroke="#cfd1d2" stroke-width="1.15"/></svg>
<svg class="i" style="left:354px;top:415.5px" width="9.5" height="10.4" viewBox="0 0 10 11"><path d="M1.2 6.3V4.8A2.5 2.5 0 0 1 3.7 2.3H6" fill="none" stroke="#4a88c7" stroke-width="1.6"/><path d="M5.6 0.1L8.8 2.3L5.6 4.5Z" fill="#4a88c7"/><path d="M8.8 4.7V6.2A2.5 2.5 0 0 1 6.3 8.7H4" fill="none" stroke="#4a88c7" stroke-width="1.6"/><path d="M4.4 6.5L1.2 8.7L4.4 10.9Z" fill="#4a88c7"/></svg>
<svg class="i" style="left:372px;top:415.5px" width="11" height="11" viewBox="0 0 11 11"><circle cx="5.5" cy="5.5" r="5" fill="#5a5d5f" stroke="#6e7173" stroke-width="0.9"/><circle cx="5.5" cy="5.5" r="3.6" fill="#7b7e80"/></svg>
<svg class="i" style="left:394px;top:415px" width="11" height="12" viewBox="0 0 11 12"><path d="M3.5 1h-3v10h9.5v-6" fill="none" stroke="#8b8e90" stroke-width="1"/><path d="M5.2 5.2v-3h2M6.3 0.2l2.2 2l-2.2 2" fill="none" stroke="#4a88c7" stroke-width="1.4"/></svg>
<svg class="i" style="left:413.5px;top:419px" width="6" height="4.5" viewBox="0 0 6 4.5"><path d="M0.3 0.5l2.7 3l2.7 -3" fill="none" stroke="#9da0a2" stroke-width="1.1"/></svg>
<svg class="i" style="left:426px;top:415.5px" width="11" height="10.5" viewBox="0 0 11 10.5"><rect x="0.5" y="0.5" width="10" height="9.5" fill="none" stroke="#8b8e90"/><path d="M0.5 3.2h10" stroke="#8b8e90" stroke-width="1.4"/><path d="M3 3v7" stroke="#8b8e90" stroke-width="0.8"/><path d="M5.5 3v7" stroke="#8b8e90" stroke-width="0.8"/><path d="M8 3v7" stroke="#8b8e90" stroke-width="0.8"/><path d="M0.5 5.46667h10" stroke="#8b8e90" stroke-width="0.8"/><path d="M0.5 7.73333h10" stroke="#8b8e90" stroke-width="0.8"/></svg>
<svg class="i" style="left:446px;top:419px" width="6" height="4.5" viewBox="0 0 6 4.5"><path d="M0.3 0.5l2.7 3l2.7 -3" fill="none" stroke="#9da0a2" stroke-width="1.1"/></svg>
<svg class="i" style="left:465px;top:415.5px" width="8" height="11" viewBox="0 0 8 11"><rect x="0.4" y="0.4" width="7.2" height="10.2" fill="none" stroke="#8b8e90" stroke-width="0.9"/><path d="M1.5 2.2h5" stroke="#4a88c7" stroke-width="1.3"/><path d="M1.6 4.8h1.2M3.4 4.8h1.2M5.2 4.8h1.2M1.6 6.8h1.2M3.4 6.8h1.2M5.2 6.8h1.2M1.6 8.8h1.2M3.4 8.8h1.2M5.2 8.8h1.2" stroke="#8b8e90" stroke-width="1.2"/></svg>
<svg class="i" style="left:1075px;top:414.5px" width="12" height="12" viewBox="0 0 12 12"><circle cx="4.6" cy="4.6" r="3.8" fill="#484c4e" stroke="#232527" stroke-width="0.9"/><path d="M7.6 7.6l3.2 3.2" stroke="#b4b6b7" stroke-width="1.7"/></svg>
<svg class="i" style="left:1218px;top:415.5px" width="12" height="10.5" viewBox="0 0 12 10.5"><rect x="0.5" y="0.5" width="11" height="9.5" fill="none" stroke="#85888a"/><path d="M0.5 3.2h11" stroke="#85888a" stroke-width="1.4"/><path d="M3.25 3v7" stroke="#85888a" stroke-width="0.8"/><path d="M6 3v7" stroke="#85888a" stroke-width="0.8"/><path d="M8.75 3v7" stroke="#85888a" stroke-width="0.8"/><path d="M0.5 5.46667h11" stroke="#85888a" stroke-width="0.8"/><path d="M0.5 7.73333h11" stroke="#85888a" stroke-width="0.8"/></svg>
<svg class="i" style="left:1238px;top:415px" width="10" height="11" viewBox="0 0 10 11"><rect x="0.5" y="0.5" width="9" height="10" fill="none" stroke="#8e9193" stroke-width="0.9"/><path d="M2 3.8h6M2 6h6M2 8.4h2.4M5.4 8.4h2.6" stroke="#8b8e90" stroke-width="1.2"/></svg>
<svg class="i" style="left:1256px;top:415px" width="10" height="11" viewBox="0 0 10 11"><path d="M0.5 0.5h6l3 3v7h-9z" fill="none" stroke="#8e9193" stroke-width="0.9"/><rect x="2" y="4.4" width="6.4" height="5" fill="#4a88c7"/><path d="M3 8.5l4.2 -2.6" stroke="#2f5e8d" stroke-width="0.9"/></svg>
<svg class="i" style="left:1105px;top:681px" width="11" height="8" viewBox="0 0 11 8"><rect x="0.5" y="0.5" width="10" height="7" fill="none" stroke="#636668" stroke-width="0.9"/><path d="M3 4h5M4.5 2.6l-1.5 1.4l1.5 1.4M6.5 2.6l1.5 1.4l-1.5 1.4" fill="none" stroke="#636668" stroke-width="0.8"/></svg>
<svg class="i" style="left:1128.5px;top:680px" width="8" height="10.5" viewBox="0 0 8 10.5"><rect x="0" y="0" width="7.6" height="10.2" rx="0.8" fill="#b9bbbc"/><path d="M1.2 2h1.6M1.2 5.1h1.6M1.2 8.2h1.6" stroke="#3c3f41" stroke-width="1.3"/><path d="M0 3.5h7.6M0 6.7h7.6" stroke="#3c3f41" stroke-width="0.7"/></svg>
<svg class="i" style="left:1148.5px;top:679.5px" width="9.5" height="10.4" viewBox="0 0 10 11"><path d="M1.2 6.3V4.8A2.5 2.5 0 0 1 3.7 2.3H6" fill="none" stroke="#85888a" stroke-width="1.6"/><path d="M5.6 0.1L8.8 2.3L5.6 4.5Z" fill="#85888a"/><path d="M8.8 4.7V6.2A2.5 2.5 0 0 1 6.3 8.7H4" fill="none" stroke="#85888a" stroke-width="1.6"/><path d="M4.4 6.5L1.2 8.7L4.4 10.9Z" fill="#85888a"/></svg>
<svg class="i" style="left:1169.5px;top:679.5px" width="12" height="10.5" viewBox="0 0 12 10.5"><path d="M6 0.8l5.4 9.2h-10.8z" fill="none" stroke="#85888a" stroke-width="1"/><path d="M6 4v3.2M6 8v1" stroke="#85888a" stroke-width="1"/></svg>
<svg class="i" style="left:1290px;top:679.5px" width="9" height="11" viewBox="0 0 9 11"><path d="M0.3 2.2h8.4M3 2v-1.4h3v1.4" fill="none" stroke="#77797b" stroke-width="1.1"/><rect x="1" y="3" width="7" height="7.6" rx="0.8" fill="#6a6d6f"/><path d="M3 4.2v5.2M4.5 4.2v5.2M6 4.2v5.2" stroke="#3c3f41" stroke-width="0.6"/></svg>
<span class="t" style="left:39px;top:8.0px;font-size:12.5px;color:#c0c2c3;transform:scaleX(0.8434);">File</span>
<span class="t" style="left:72px;top:8.0px;font-size:12.5px;color:#c0c2c3;transform:scaleX(0.9514);">Edit</span>
<span class="t" style="left:107.5px;top:8.0px;font-size:12.5px;color:#c0c2c3;transform:scaleX(0.9302);">View</span>
<span class="t" style="left:148.5px;top:8.0px;font-size:12.5px;color:#c0c2c3;transform:scaleX(0.9343);">Database</span>
<span class="t" style="left:214px;top:8.0px;font-size:12.5px;color:#c0c2c3;transform:scaleX(0.9504);">SQL Commander</span>
<span class="t" style="left:323px;top:8.0px;font-size:12.5px;color:#c0c2c3;transform:scaleX(0.9764);">Tools</span>
<span class="t" style="left:367.5px;top:8.0px;font-size:12.5px;color:#c0c2c3;transform:scaleX(1.0007);">Window</span>
<span class="t" style="left:428.5px;top:8.0px;font-size:12.5px;color:#c0c2c3;transform:scaleX(0.9526);">Help</span>
<span class="t" style="left:564px;top:8.0px;font-size:12.5px;color:#8f9294;transform:scaleX(0.9607);">DbVisualizer Pro 24.1 - Untitled*</span>
<span class="t" style="left:11px;top:67.0px;font-size:12.5px;color:#bbbdbe;transform:scaleX(0.9810);">&lt;Drop your favorite objects here&gt;</span>
<span class="t" style="left:28px;top:97.5px;font-size:12.5px;color:#d4d6d7;font-weight:700;transform:scaleX(0.9353);">Databases</span>
<span class="t" style="left:127px;top:97.5px;font-size:12.5px;color:#bbbdbe;transform:scaleX(0.9162);">Scripts</span>
<span class="t" style="left:202px;top:97.5px;font-size:12.5px;color:#bbbdbe;transform:scaleX(0.9337);">Favorites</span>
<span class="t" style="left:17px;top:151.0px;font-size:12.5px;color:#ffffff;font-weight:700;transform:scaleX(0.9379);">Connections</span>
<span class="t" style="left:35.5px;top:168.0px;font-size:12.5px;color:#cfd1d2;font-weight:700;transform:scaleX(0.9481);">MySQL 8</span>
<span class="t" style="left:53px;top:185.0px;font-size:12.5px;color:#bbbdbe;transform:scaleX(0.9286);">Databases</span>
<span class="t" style="left:53px;top:202.0px;font-size:12.5px;color:#bbbdbe;transform:scaleX(0.9333);">DBA Views</span>
<span class="t" style="left:35px;top:219.0px;font-size:12.5px;color:#bbbdbe;transform:scaleX(0.9325);">PostgreSQL</span>
<span class="t" style="left:35px;top:236.0px;font-size:12.5px;color:#bbbdbe;transform:scaleX(0.9099);">SQL Server</span>
<span class="t" style="left:0px;top:533.5px;font-size:12.5px;color:#bbbdbe;transform:scaleX(0.9840);">Object type cannot be filtered</span>
<span class="t" style="left:275px;top:557.0px;font-size:12.5px;color:#8c8f91;transform:scaleX(0.8948);">ANY</span>
<span class="t" style="left:322.5px;top:557.0px;font-size:12.5px;color:#8c8f91;transform:scaleX(0.8315);">ALL</span>
<span class="t" style="left:24.5px;top:584.5px;font-size:12.5px;color:#bbbdbe;transform:scaleX(0.9043);">Field</span>
<span class="t" style="left:54px;top:584.5px;font-size:12.5px;color:#bbbdbe;transform:scaleX(0.9843);">Condition</span>
<span class="t" style="left:110px;top:584.5px;font-size:12.5px;color:#bbbdbe;transform:scaleX(0.9502);">Value</span>
<span class="t" style="left:91px;top:619.0px;font-size:12.5px;color:#bbbdbe;transform:scaleX(0.9809);">Object type cannot be filtered</span>
<span class="t" style="left:378px;top:97.5px;font-size:12.5px;color:#d4d6d7;font-weight:700;transform:scaleX(0.9851);">1: Untitled*</span>
<span class="t" style="left:350px;top:150.3px;font-size:12.5px;color:#bbbdbe;transform:scaleX(0.9481);">Database Connection</span>
<span class="t" style="left:639.7px;top:150.3px;font-size:12.5px;color:#bbbdbe;transform:scaleX(0.9237);">Sticky</span>
<span class="t" style="left:675.3px;top:150.3px;font-size:12.5px;color:#bbbdbe;transform:scaleX(0.9212);">Database</span>
<span class="t" style="left:905.5px;top:150.3px;font-size:12.5px;color:#bbbdbe;transform:scaleX(0.9158);">Schema</span>
<span class="t" style="left:1135px;top:150.3px;font-size:12.5px;color:#bbbdbe;transform:scaleX(0.9255);">Max Rows</span>
<span class="t" style="left:1204px;top:150.3px;font-size:12.5px;color:#bbbdbe;transform:scaleX(0.9183);">Max Chars</span>
<span class="t" style="left:372.5px;top:173.5px;font-size:12.5px;color:#bbbdbe;transform:scaleX(0.9489);">MySQL 8</span>
<span class="t" style="left:1143px;top:173.5px;font-size:12.5px;color:#bbbdbe;transform:scaleX(0.9420);">1000</span>
<span class="t" style="left:1211.5px;top:173.5px;font-size:12.5px;color:#bbbdbe;transform:scaleX(0.9438);">-1</span>
<span class="t m" style="left:360.3px;top:194.8px;font-size:12px;color:#868a8e;transform:scaleX(0.7913);">1</span>
<span class="t m" style="left:373.0px;top:194.5px;font-size:12.4px;color:#bcbec4;transform:scaleX(0.9035);"><span style="color:#cf8e6d">SELECT</span> <span style="color:#cf8e6d">CONVERT</span>(<span style="color:#2aacb8">42</span>, <span style="color:#cf8e6d">CHAR</span>);</span>
<span class="t" style="left:353px;top:350.7px;font-size:12.5px;color:#bbbdbe;transform:scaleX(0.9632);">1 / 26  [25]   INS</span>
<span class="t" style="left:1015.5px;top:350.7px;font-size:12.5px;color:#bbbdbe;transform:scaleX(0.7962);">CRLF</span>
<span class="t" style="left:1052px;top:350.7px;font-size:12.5px;color:#bbbdbe;transform:scaleX(0.9853);">Auto Commit: ON</span>
<span class="t" style="left:1158.5px;top:350.7px;font-size:12.5px;color:#bbbdbe;transform:scaleX(0.9590);">Cp1252</span>
<span class="t" style="left:1209.7px;top:350.7px;font-size:12.5px;color:#bbbdbe;transform:scaleX(0.9841);">Untitled*</span>
<span class="t" style="left:1292px;top:142px;font-size:12.5px;color:#c9cbcc;transform-origin:0 0;transform:rotate(90deg) scaleX(0.9310);">SQL Editor</span>
<span class="t" style="left:1292px;top:224.5px;font-size:12.5px;color:#c0c2c3;transform-origin:0 0;transform:rotate(90deg) scaleX(0.9289);">Query Builder</span>
<span class="t" style="left:378px;top:382.5px;font-size:12.5px;color:#bbbdbe;transform:scaleX(0.9109);">Log</span>
<span class="t" style="left:437.5px;top:382.5px;font-size:12.5px;color:#d4d6d7;font-weight:700;transform:scaleX(0.9293);">1: SELECT CONVERT(42, CHAR) [1]</span>
<span class="t" style="left:362px;top:443.0px;font-size:11px;color:#bbbdbe;transform:scaleX(1.0511);">*</span>
<span class="t" style="left:377.3px;top:443.5px;font-size:12.5px;color:#bbbdbe;transform:scaleX(0.8846);">CONVERT(42, CHAR)</span>
<span class="t" style="left:361px;top:466.8px;font-size:12.5px;color:#d4d6d7;font-weight:700;transform:scaleX(0.7191);">1</span>
<span class="t" style="left:377px;top:466.8px;font-size:12.5px;color:#ffffff;transform:scaleX(0.9348);">42</span>
<span class="t" style="left:352px;top:656.5px;font-size:12.5px;color:#bbbdbe;transform:scaleX(0.9533);">Format: Text</span>
<span class="t" style="left:1085.5px;top:656.5px;font-size:12.5px;color:#bbbdbe;transform:scaleX(0.9498);">0.005/0.001 sec</span>
<span class="t" style="left:1185.5px;top:656.5px;font-size:12.5px;color:#bbbdbe;transform:scaleX(0.8913);">1/1</span>
<span class="t" style="left:1217.5px;top:656.5px;font-size:12.5px;color:#bbbdbe;transform:scaleX(0.9200);">1/1</span>
<span class="t" style="left:1250px;top:656.5px;font-size:12.5px;color:#bbbdbe;transform:scaleX(0.9127);">1-1</span>
<span class="t" style="left:1193px;top:678.0px;font-size:12.5px;color:#c4c6c7;transform:scaleX(0.9901);">136M of 2048M</span>
</body></html>
